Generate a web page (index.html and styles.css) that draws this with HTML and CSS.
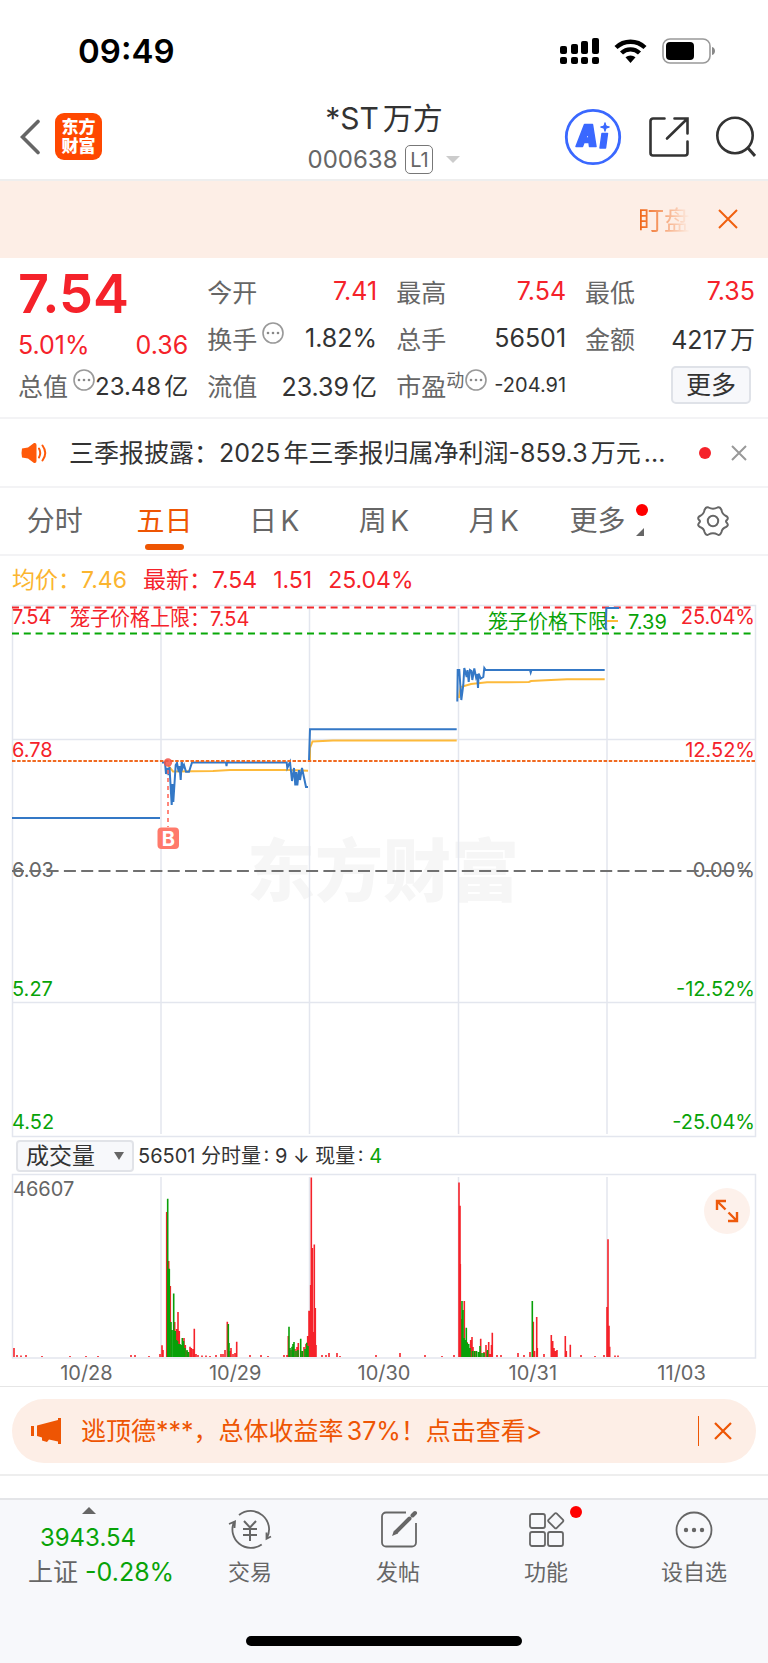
FILE: index.html
```
<!DOCTYPE html>
<html lang="zh-CN">
<head>
  <meta charset="UTF-8" />
  <meta name="viewport" content="width=device-width, initial-scale=1.0" />
  <title>*ST万方 000638</title>
  <link rel="stylesheet" href="styles.css">
</head>
<body>
  <div class="status-bar">
    <span class="clock">09:49</span>
    <div class="status-icons">
      <svg width="39" height="28" viewBox="0 0 39 28">
        <g fill="#000">
          <rect x="0" y="9" width="7" height="8" rx="2" /><rect x="11" y="7" width="7" height="10" rx="2" />
          <rect x="21" y="4" width="7" height="13" rx="2" /><rect x="32" y="1" width="7" height="16" rx="2" />
          <rect x="0" y="20" width="7" height="7" rx="2" /><rect x="11" y="20" width="7" height="7" rx="2" />
          <rect x="21" y="20" width="7" height="7" rx="2" /><rect x="32" y="20" width="7" height="7" rx="2" />
        </g>
      </svg>
      <svg class="wifi" width="33" height="26" viewBox="0 0 33 26">
        <g fill="none" stroke="#000" stroke-width="4.4">
          <path d="M2 9.5A21 21 0 0 1 31 9.5" /><path d="M7.5 15A13 13 0 0 1 25.5 15" />
        </g>
        <path d="M11.5 19.3A7.5 7.5 0 0 1 21.5 19.3L16.5 25Z" fill="#000" />
      </svg>
      <svg width="54" height="26" viewBox="0 0 54 26">
        <rect x="1" y="1" width="47" height="24" rx="7" fill="none" stroke="#999" stroke-width="1.6" />
        <rect x="4" y="4" width="28" height="18" rx="4" fill="#000" />
        <path d="M50 9C54 10 54 16 50 17Z" fill="#888" />
      </svg>
    </div>
  </div>

  <header class="header">
    <div class="header-side">
      <button class="icon-btn back" aria-label="返回">
        <svg width="20" height="36" viewBox="0 0 20 36"><path d="M18 2.5L2.5 18L18 33.5" fill="none" stroke="#666" stroke-width="3.6" stroke-linecap="round" /></svg>
      </button>
      <a class="logo" href="#"><span>东方</span><span>财富</span></a>
    </div>
    <div class="title">
      <h1>*ST万方</h1>
      <div class="code"><span>000638</span><span class="level">L1</span><i class="caret"></i></div>
    </div>
    <div class="header-side header-actions">
      <button class="icon-btn" aria-label="AI">
        <svg width="58" height="58" viewBox="0 0 58 58">
          <circle cx="29" cy="29" r="26.7" fill="none" stroke="#3a68ff" stroke-width="2.8" />
          <g fill="#3a68ff" stroke="#3a68ff" stroke-width="1.5" stroke-linejoin="round">
            <path fill-rule="evenodd" d="M20.5 16.5H28.5L32 38.5H25.5L25 34.5H20L18.5 38.5H12ZM24 24L21.8 30H24.8Z" />
            <path d="M38 25.5H43.5L41.5 40H36Z" />
            <path d="M41 15C41.5 18 42 18.5 45 19C42 19.5 41.5 20 41 23C40.5 20 40 19.5 37 19C40 18.5 40.5 18 41 15Z" />
          </g>
        </svg>
      </button>
      <button class="icon-btn" aria-label="分享">
        <svg width="40" height="40" viewBox="0 0 40 40">
          <path d="M15.5 1.5H4A2.5 2.5 0 0 0 1.5 4V36A2.5 2.5 0 0 0 4 38.5H36A2.5 2.5 0 0 0 38.5 36V24.5M25.5 1.5H38.5V16.5M38 2L18 21.5" fill="none" stroke="#333" stroke-width="2.6" stroke-linecap="round" />
        </svg>
      </button>
      <button class="icon-btn" aria-label="搜索">
        <svg width="40" height="41" viewBox="0 0 40 41">
          <circle cx="19" cy="19.5" r="17.7" fill="none" stroke="#333" stroke-width="2.6" />
          <path d="M31.5 31.5L39 40" stroke="#333" stroke-width="3" />
        </svg>
      </button>
    </div>
  </header>

  <div class="watch-bar">
    <span class="watch-text">盯盘</span>
    <button class="icon-btn" aria-label="关闭">
      <svg width="20" height="20" viewBox="0 0 20 20"><path d="M1 1L19 19M19 1L1 19" stroke="#f0600f" stroke-width="2" /></svg>
    </button>
  </div>

  <section class="quote">
    <div class="quote-col">
      <div class="price">7.54</div>
      <div class="change"><span>5.01%</span><span>0.36</span></div>
      <div class="stat"><span class="name">总值</span><svg class="info"><use href="#more-dots" /></svg><span class="value medium">23.48亿</span></div>
    </div>
    <div class="quote-col">
      <div class="stat"><span class="name">今开</span><span class="value up">7.41</span></div>
      <div class="stat"><span class="name">换手</span><svg class="info"><use href="#more-dots" /></svg><span class="value">1.82%</span></div>
      <div class="stat"><span class="name">流值</span><span class="value">23.39亿</span></div>
    </div>
    <div class="quote-col">
      <div class="stat"><span class="name">最高</span><span class="value up">7.54</span></div>
      <div class="stat"><span class="name">总手</span><span class="value">56501</span></div>
      <div class="stat"><span class="name">市盈<sup>动</sup></span><svg class="info tight"><use href="#more-dots" /></svg><span class="value small">-204.91</span></div>
    </div>
    <div class="quote-col">
      <div class="stat"><span class="name">最低</span><span class="value up">7.35</span></div>
      <div class="stat"><span class="name">金额</span><span class="value">4217万</span></div>
      <div class="stat"><button class="more-btn">更多</button></div>
    </div>
  </section>

  <div class="notice">
    <svg width="26" height="22" viewBox="0 0 26 22">
      <path d="M1 6.5Q0 11 1 15.5L7 16.5L13 21Q15.5 21.5 15.5 19V3Q15.5 0.5 13 1L7 5.5Z" fill="#ff5a0a" />
      <path d="M18 6.5Q20.5 11 18 15.5M21.5 3.5Q27 11 21.5 18.5" fill="none" stroke="#ff5a0a" stroke-width="2" stroke-linecap="round" />
    </svg>
    <a class="notice-text" href="#">三季报披露：2025年三季报归属净利润-859.3万元...</a>
    <i class="dot"></i>
    <button class="icon-btn" aria-label="关闭">
      <svg width="16" height="16" viewBox="0 0 16 16"><path d="M1 1L15 15M15 1L1 15" stroke="#999" stroke-width="2" /></svg>
    </button>
  </div>

  <nav class="tabs">
    <button class="tab">分时</button>
    <button class="tab active">五日</button>
    <button class="tab">日K</button>
    <button class="tab">周K</button>
    <button class="tab">月K</button>
    <button class="tab tab-more">更多</button>
    <button class="tab" aria-label="设置">
      <svg width="32" height="32" viewBox="0 0 32 32" fill="none" stroke="#666" stroke-width="2">
        <path d="M11.5 2.5Q16 5 20.5 2.5Q23 1.5 24.5 5Q25 9 29 11Q32 12.5 30 15Q28 16 30 18Q32 20.5 29 22Q25 23.5 24.5 27Q23 31 20.5 29.5Q16 27 11.5 29.5Q9 31 7.5 27Q7 23.5 3 22Q0 20.5 2 18Q4 16 2 15Q0 12.5 3 11Q7 9 7.5 5Q9 1.5 11.5 2.5Z" />
        <circle cx="16" cy="16" r="5.2" />
      </svg>
    </button>
  </nav>

  <div class="legend">
    <span class="avg">均价：7.46</span>
    <span>最新：7.54</span>
    <span>1.51</span>
    <span>25.04%</span>
  </div>

  <section class="charts">
    <svg class="price-chart" viewBox="0 0 744 534">
      <text class="watermark" x="235" y="292">东方财富</text>
      <g class="grid">
        <path d="M0.5 1.5H743.5V532.5H0.5Z" />
        <path d="M0 135.5H743M0 398.5H743" />
        <path d="M149 4V530M297.5 4V530M446.5 4V530M595 4V530" />
      </g>
      <g class="labels">
        <text class="up" x="0" y="20">7.54</text>
        <text class="up" x="58" y="22">笼子价格上限：7.54</text>
        <text class="down" x="476" y="25">笼子价格下限：7.39</text>
        <text class="up end" x="743" y="20">25.04%</text>
        <text class="up" x="0" y="153">6.78</text>
        <text class="up end" x="743" y="153">12.52%</text>
        <text class="flat" x="0" y="273">6.03</text>
        <text class="flat end" x="743" y="273">0.00%</text>
        <text class="down" x="0" y="392">5.27</text>
        <text class="down end" x="743" y="392">-12.52%</text>
        <text class="down" x="0" y="525">4.52</text>
        <text class="down end" x="743" y="525">-25.04%</text>
      </g>
      <path d="M0 3.5H743" stroke="#f22a2e" stroke-width="2" stroke-dasharray="7 4.8" />
      <path d="M0 29.5H743" stroke="#08a808" stroke-width="2" stroke-dasharray="7 4.8" />
      <path d="M0 267H743" stroke="#707070" stroke-width="2" stroke-dasharray="12 5.3" />
      <g class="avg-line">
        <path d="M156 161L161 167.5L201 167L218 166L277 166L296 166.7" />
        <path d="M298 157V144L300.5 137.5L321 136.5H444.7" />
        <path d="M447 94L448.7 83L459 80L475 78.3L517 78L519 77L539 76L555 75.3H592.7" />
        <path d="M595 17H606" />
      </g>
      <g class="price-line">
        <path d="M0 214H148" />
        <path d="M150 158.5L153 158.5L154 170L155.3 164L156.5 171L157.5 163L159.7 201L160.5 180L161.3 198L163.7 161L165 159L166.7 168L167.5 162L168.7 176L169.7 157L170.7 164L172 161L174 167.7H177L180 158.5H214L214.5 162L215 158.5H274.7L275.3 164L278 158L280 177L282 164L283.3 181.5L284.3 168L285.3 181.5L287 166L288 176L290 164L294 183H296" />
        <path d="M297 157L298 125.3H444.7" />
        <path d="M445.3 97.5L445.7 66H447.3L449.3 96L451.3 81L452.3 64L454.7 73L455.5 66L456.7 78L458 66L459.5 67L460.3 76L462.3 64.5L464 73L465 70L466 84L466.7 69.5L468.7 74.5L471.3 73L472.3 64L473.7 66H518L518.7 68.5L519.5 66H592.7" />
        <path d="M593.7 26L594.3 4H607" />
      </g>
      <path d="M0 157H743" stroke="#f06a20" stroke-width="2" stroke-dasharray="3.5 1.6" />
      <path d="M156 166V223" stroke="#ff6a5c" stroke-width="1.6" stroke-dasharray="4 4" />
      <circle cx="156" cy="158.5" r="4.2" fill="#f2554a" opacity=".85" />
      <rect x="145.5" y="223.5" width="21.5" height="21.5" rx="4" fill="#ff7a6b" />
      <text class="buy" x="156.3" y="241.5">B</text>
    </svg>

    <div class="volume-head">
      <div class="select-wrap">
        <select aria-label="指标"><option>成交量</option></select>
      </div>
      <span>56501 分时量: 9 ↓ 现量: <b>4</b></span>
    </div>

    <div class="volume">
      <svg viewBox="0 0 744 185">
        <g class="grid">
          <path d="M0.5 0.5H743.5V184H0.5Z" />
          <path d="M149 3V183M297.5 3V183M446.5 3V183M595 3V183" />
        </g>
        <path class="bars-up" d="M2 183V174M5 183V181M9 183V181.5M14 183V181M30 183V182M58 183V182M74 183V182M86 183V182M119 183V181M123 183V181M137 183V182M148 183V180M150 183V171.3M151 183V176M154.7 183V38M156.7 183V87M158.3 183V112M162.7 183V148M164.7 183V155M166 183V138M167.3 183V157M169 183V171M172 183V164M173.3 183V171M175 183V177M178 183V172.7M179.3 183V174M181 183V175M182.3 183V154.7M184 183V180M186 183V181M190 183V181.5M194 183V181.5M198 183V182M204 183V181M209 183V180M211 183V180M213 183V176M215.3 183V147.7M218 183V177M219 183V174M221 183V180M223 183V179M224.7 183V167.7M238 183V181M249 183V181M256 183V182M272 183V181M275 183V181M276.3 183V162M279 183V176M283 183V175M285 183V173M286.3 183V169M289 183V177M292 183V173M294 183V170M295.7 183V162M297 183V136.7M298 183V137M298.7 183V111M299.3 183V3.5M300.3 183V74M301.3 183V158M302.3 183V70.5M303.3 183V134M304 183V171M310 183V181M314 183V181M317 183V179M325 183V179M328 183V182M364 183V181M388 183V179M413 183V181M430 183V182M442 183V181M447 183V8.5M448 183V31.7M448.3 183V90M449.3 183V145M452.3 183V127M455 183V168M458.7 183V166M460 183V163M461 183V173M463 183V177M468.7 183V164.7M472 183V178M474 183V171M475 183V177M476.7 183V168M478 183V180M479.5 183V171M480.3 183V158.7M485 183V181M489 183V181M506 183V179M512 183V181M518 183V178M521.3 183V147.7M522.5 183V177M524.7 183V143M525.3 183V174M532 183V180M539.3 183V161M540.7 183V167M542 183V174M543.5 183V177M545 183V176M553.3 183V162M554.3 183V177M558.3 183V170.7M569 183V181M583 183V182M592 183V181M595 183V133M596 183V65.3M597 183V151.7M597.7 183V172.7M603 183V181.5M606 183V181.5" />
        <path class="bars-down" d="M155.7 183V24.7M157.3 183V94.7M159 183V148M160 183V156M161.7 183V119.5M163.3 183V157M164.5 183V166M165.5 183V167M167 183V170M168 183V170M169.3 183V171M170.3 183V164M171.5 183V167M173 183V174M175 183V176M176.5 183V178M216.3 183V150M217 183V169M277 183V152.7M278 183V174M280 183V172.7M281 183V170M282 183V168M284 183V177M286 183V176M288.7 183V164.7M290.5 183V177M293 183V175M294.7 183V168.7M296 183V172M450 183V127M451 183V136M452 183V164M453 183V166M454.3 183V153.7M455.3 183V169M456.7 183V170M458 183V174M460.5 183V177M462.5 183V177M464.5 183V177M466.5 183V178M468 183V172M470 183V179M472 183V179M475.5 183V176M520.3 183V127" />
        <text class="flat" x="1" y="22">46607</text>
      </svg>
      <button class="expand-btn" aria-label="全屏">
        <svg width="22" height="22" viewBox="0 0 22 22" fill="none" stroke="#ee5a0c" stroke-width="2.4">
          <path d="M1 10V1H10M1.5 1.5L9.5 9.5M21 12V21H12M20.5 20.5L12.5 12.5" />
        </svg>
      </button>
    </div>
    <div class="dates"><span>10/28</span><span>10/29</span><span>10/30</span><span>10/31</span><span>11/03</span></div>
  </section>

  <div class="banner-wrap">
    <div class="banner">
      <svg width="30" height="26" viewBox="0 0 30 26" fill="#ee5503">
        <path d="M0 8H3V18H0ZM6 7.5L27 2V0H30V26H27V23.5L18 21.5L16 24L11 22.5V19.5L6 18Z" />
      </svg>
      <a href="#">逃顶德***，总体收益率37%！点击查看&gt;</a>
      <i class="divider"></i>
      <button class="icon-btn" aria-label="关闭">
        <svg width="18" height="18" viewBox="0 0 18 18"><path d="M1 1L17 17M17 1L1 17" stroke="#ee5503" stroke-width="2.2" /></svg>
      </button>
    </div>
  </div>

  <main class="content"></main>

  <footer class="bottom-nav">
    <div class="nav-items">
      <a class="index" href="#">
        <i class="arrow-up"></i>
        <span class="index-value">3943.54</span>
        <span class="index-name">上证 <em>-0.28%</em></span>
      </a>
      <a class="nav-item" href="#">
        <svg width="44" height="40" viewBox="0 0 44 40" fill="none" stroke="#666" stroke-width="1.8">
          <path d="M11 5A18.5 18.5 0 0 1 38.7 28.5M38.5 22.5V28.7L43 26.5" />
          <path d="M33.7 34.5A18.5 18.5 0 0 1 6 12M6.5 18L7 11.5L1 14" />
          <path d="M16 11L22 17.5L28 11M22 17.5V31M15 19H29M15 25H29" stroke-width="2" />
        </svg>
        <span>交易</span>
      </a>
      <a class="nav-item" href="#">
        <svg width="44" height="40" viewBox="-2 0 44 40" fill="none" stroke="#666" stroke-width="1.8">
          <path d="M28 2.5H8A4 4 0 0 0 4 6.5V32.5A4 4 0 0 0 8 36.5H34A4 4 0 0 0 38 32.5V13" />
          <path d="M31.5 8.5L18 22M34.5 5.5L37 3" stroke-width="4" stroke-linecap="round" />
          <path d="M14 26L16 20.5L20 23.5Z" fill="#666" stroke="none" />
        </svg>
        <span>发帖</span>
      </a>
      <a class="nav-item" href="#">
        <svg width="44" height="40" viewBox="-2 0 44 40" fill="none" stroke="#666" stroke-width="1.8">
          <rect x="4" y="4" width="15" height="14" rx="2" /><rect x="4" y="22" width="15" height="14" rx="2" /><rect x="22" y="22" width="15" height="14" rx="2" />
          <rect x="24" y="5" width="11.5" height="11.5" rx="1.5" transform="rotate(45 29.75 10.75)" />
        </svg>
        <i class="dot"></i>
        <span>功能</span>
      </a>
      <a class="nav-item" href="#">
        <svg width="44" height="40" viewBox="0 0 44 40">
          <circle cx="22" cy="20" r="17.5" fill="none" stroke="#666" stroke-width="1.8" />
          <g fill="#666"><circle cx="14" cy="20" r="2.2" /><circle cx="22" cy="20" r="2.2" /><circle cx="30" cy="20" r="2.2" /></g>
        </svg>
        <span>设自选</span>
      </a>
    </div>
    <div class="home-bar"></div>
  </footer>

  <svg width="0" height="0" class="defs">
    <symbol id="more-dots" viewBox="0 0 22 22">
      <circle cx="11" cy="11" r="10" fill="none" stroke="#999" stroke-width="1.6" />
      <g fill="#888"><circle cx="6" cy="11" r="1.3" /><circle cx="11" cy="11" r="1.3" /><circle cx="16" cy="11" r="1.3" /></g>
    </symbol>
  </svg>
</body>
</html>
```
FILE: styles.css
```
:root {
  --up: #f5222a;
  --down: #08a308;
  --text: #333;
  --muted: #666;
  --orange: #ee5503;
  --peach: #fdeee6;
  --line: #f3f3f5;
}

* {
  box-sizing: border-box;
  margin: 0;
  padding: 0;
}

body {
  display: flex;
  flex-direction: column;
  min-height: 100vh;
  background: #fff;
  color: var(--text);
  font-family: Inter, "Noto Sans CJK SC", sans-serif;
  font-size: 25px;
  text-autospace: normal;
}

a { color: inherit; text-decoration: none; }
button, select { font: inherit; color: inherit; }
svg { display: block; flex: none; }

.icon-btn {
  display: block;
  border: none;
  background: none;
  cursor: pointer;
}

.dot {
  width: 12px;
  height: 12px;
  border-radius: 50%;
  background: var(--up);
}

/* Status bar */
.status-bar {
  display: flex;
  align-items: center;
  justify-content: space-between;
  height: 96px;
  padding: 6px 52px 0 78px;
}
.clock {
  color: #000;
  font-size: 33px;
  font-weight: 600;
}
.status-icons {
  display: flex;
  align-items: center;
  gap: 15px;
}

/* Header */
.header {
  display: grid;
  grid-template-columns: 1fr auto 1fr;
  align-items: center;
  height: 85px;
  padding: 0 12px 2px;
  border-bottom: 2px solid #eee;
}
.header-side {
  display: flex;
  align-items: center;
  gap: 15px;
}
.header-actions {
  justify-content: flex-end;
  gap: 27px;
}
.back { margin-left: 8px; }
.logo {
  display: flex;
  flex-direction: column;
  justify-content: center;
  width: 47px;
  height: 47px;
  border-radius: 9px;
  background: #ff4800;
  color: #fff;
  font-size: 17px;
  font-weight: 900;
  line-height: 19px;
  text-align: center;
}
.title {
  text-align: center;
}
.title h1 {
  font-size: 30px;
  font-weight: 400;
  line-height: 38px;
}
.code {
  display: flex;
  align-items: center;
  justify-content: center;
  margin-top: 8px;
  color: var(--muted);
  font-size: 24px;
  line-height: 29px;
}
.level {
  width: 28px;
  height: 29px;
  margin: 0 13px 0 8px;
  border: 1px solid #777;
  border-radius: 5px;
  font-size: 20px;
  line-height: 28px;
}
.caret {
  border: 7px solid transparent;
  border-top-color: #ccc;
  border-bottom: none;
}

/* Scrolling strip */
.watch-bar {
  display: flex;
  align-items: center;
  justify-content: flex-end;
  gap: 28px;
  height: 77px;
  padding: 0 30px 2px 0;
  background: var(--peach);
}
.watch-text {
  background: linear-gradient(90deg, #f0600f, #fdeee6);
  background-clip: text;
  color: transparent;
  font-size: 26px;
}

/* Quote */
.quote {
  display: grid;
  grid-template-columns: repeat(4, 1fr);
  gap: 19px;
  padding: 9px 13px 9px 18px;
  border-bottom: 2px solid var(--line);
}
.price {
  height: 60px;
  color: var(--up);
  font-size: 54px;
  font-weight: 600;
  line-height: 54px;
}
.change {
  display: flex;
  justify-content: space-between;
  height: 34px;
  color: var(--up);
  line-height: 36px;
}
.stat {
  display: flex;
  align-items: center;
  height: 47px;
  white-space: nowrap;
}
.name { color: var(--muted); }
.name sup {
  font-size: 18px;
  line-height: 0;
}
.value { margin-left: auto; }
.value.medium { font-size: 24px; }
.value.small { font-size: 20px; }
.up { color: var(--up); }
.info {
  width: 22px;
  height: 22px;
  margin: 0 0 10px 5px;
}
.info.tight { margin-left: 1px; }
.more-btn {
  width: 80px;
  height: 38px;
  margin: 0 4px 0 auto;
  border: 2px solid #dfe2e8;
  border-radius: 5px;
  background: #f7f8fb;
  line-height: 32px;
}

/* Notice */
.notice {
  display: flex;
  align-items: center;
  height: 69px;
  padding: 0 21px;
  border-bottom: 2px solid var(--line);
}
.notice-text {
  flex: 1;
  margin: 0 20px 0 22px;
  overflow: hidden;
  line-height: 36px;
  white-space: nowrap;
}
.notice .icon-btn { margin-left: 20px; }

/* Tabs */
.tabs {
  display: grid;
  grid-template-columns: repeat(7, 1fr);
  height: 68px;
  border-bottom: 2px solid var(--line);
}
.tab {
  position: relative;
  display: flex;
  align-items: center;
  justify-content: center;
  border: none;
  background: none;
  color: var(--muted);
  font-size: 28px;
  line-height: 32px;
  cursor: pointer;
}
.tab.active { color: var(--orange); }
.tab.active::after {
  content: "";
  position: absolute;
  bottom: 4px;
  width: 39px;
  height: 6px;
  border-radius: 3px;
  background: var(--orange);
}
.tab-more { padding-right: 12px; }
.tab-more::before {
  content: "";
  position: absolute;
  top: 16px;
  right: 10px;
  width: 12px;
  height: 12px;
  border-radius: 50%;
  background: #f00;
}
.tab-more::after {
  content: "";
  position: absolute;
  right: 14px;
  bottom: 18px;
  border-bottom: 8px solid var(--muted);
  border-left: 8px solid transparent;
}

/* Legend */
.legend {
  display: flex;
  align-items: center;
  gap: 16px;
  height: 48px;
  padding: 0 12px;
  color: var(--up);
  font-size: 23px;
  line-height: 32px;
}
.avg { color: #fbb52f; }

/* Charts */
.charts {
  padding: 0 12px;
}
.charts svg { overflow: visible; }
.price-chart,
.volume > svg {
  width: 100%;
  height: auto;
}
.grid path {
  fill: none;
  stroke: #e3e6ee;
  stroke-width: 1.5;
}
.watermark {
  fill: #f6f6f6;
  font-size: 68px;
  font-weight: 900;
}
.labels text,
.volume text {
  font-size: 20px;
}
text.up { fill: var(--up); }
text.down { fill: var(--down); }
text.flat { fill: var(--muted); }
.end { text-anchor: end; }
.price-line path,
.avg-line path {
  fill: none;
  stroke-width: 2;
}
.price-line path { stroke: #3478c6; }
.avg-line path { stroke: #fdba3b; }
.buy {
  fill: #fff;
  font-size: 20px;
  font-weight: 700;
  text-anchor: middle;
}
.volume-head {
  display: flex;
  align-items: center;
  gap: 4px;
  height: 36px;
  padding-left: 4px;
  font-size: 20px;
  line-height: 24px;
}
.volume-head b {
  color: var(--down);
  font-weight: 400;
}
.select-wrap {
  position: relative;
}
.select-wrap::after {
  content: "";
  position: absolute;
  top: 12px;
  right: 10px;
  border: 5px solid transparent;
  border-top: 8px solid var(--muted);
  border-bottom: none;
  pointer-events: none;
}
.volume-head select {
  display: block;
  width: 118px;
  height: 32px;
  padding-left: 8px;
  border: 2px solid #e1e3e8;
  border-radius: 4px;
  background: #f7f8fb;
  font-size: 23px;
  line-height: 28px;
  appearance: none;
}
.volume {
  position: relative;
}
.bars-up,
.bars-down {
  stroke: #f5222a;
  stroke-width: 1.6;
}
.bars-down { stroke: #08a008; }
.expand-btn {
  position: absolute;
  top: 14px;
  right: 6px;
  display: flex;
  align-items: center;
  justify-content: center;
  width: 46px;
  height: 46px;
  border: none;
  border-radius: 50%;
  background: #fdf1eb;
  cursor: pointer;
}
.dates {
  display: grid;
  grid-template-columns: repeat(5, 1fr);
  padding-top: 1px;
  color: var(--muted);
  font-size: 20px;
  line-height: 26px;
  text-align: center;
}

/* Banner */
.banner-wrap {
  padding: 12px 12px 11px;
  border-top: 1px solid #e6e6e6;
  border-bottom: 2px solid #eee;
}
.banner {
  display: flex;
  align-items: center;
  height: 64px;
  padding: 0 24px 0 19px;
  border-radius: 32px;
  background: var(--peach);
  color: var(--orange);
}
.banner a {
  flex: 1;
  margin-left: 20px;
  line-height: 32px;
  white-space: nowrap;
}
.divider {
  width: 1px;
  height: 30px;
  margin-right: 15px;
  background: var(--orange);
}

.content {
  flex: 1;
  min-height: 22px;
}

/* Bottom navigation */
.bottom-nav {
  height: 165px;
  border-top: 2px solid #e4e5e8;
  background: #f7f8fb;
  color: var(--muted);
}
.nav-items {
  display: grid;
  grid-template-columns: 176fr repeat(4, 148fr);
  height: 136px;
}
.index {
  display: flex;
  flex-direction: column;
  padding: 7px 0 0 28px;
  white-space: nowrap;
}
.index-value,
.index em {
  color: var(--down);
  font-style: normal;
}
.index-value {
  width: 120px;
  font-size: 24px;
  line-height: 48px;
  text-align: center;
}
.index-name { line-height: 20px; }
.arrow-up {
  width: 14px;
  margin-left: 54px;
  border: 7px solid transparent;
  border-top: none;
  border-bottom-color: var(--muted);
}
.nav-item {
  position: relative;
  display: flex;
  flex-direction: column;
  align-items: center;
  padding-top: 10px;
  font-size: 22px;
  line-height: 44px;
}
.nav-item .dot {
  position: absolute;
  top: 6px;
  right: 38px;
  background: #f00;
}
.home-bar {
  width: 36%;
  height: 10px;
  margin: 0 auto;
  border-radius: 5px;
  background: #000;
}
.defs { position: absolute; }
```
